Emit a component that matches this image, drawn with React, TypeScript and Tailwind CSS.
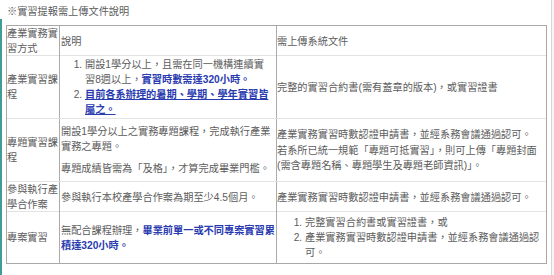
import React from "react";

const blue = "text-[#2a3bb0] font-bold";

function Row({
  h,
  first,
  c1,
  c2,
  c3,
}: {
  h: string;
  first?: boolean;
  c1: React.ReactNode;
  c2: React.ReactNode;
  c3: React.ReactNode;
}) {
  return (
    <div
      className={`grid grid-cols-[52px_217px_1fr] ${h} ${
        first ? "" : "border-t border-[#e3e3e3]"
      }`}
    >
      <div className="flex items-center pl-0">
        <div>{c1}</div>
      </div>
      <div className="flex items-center border-l border-[#ababab] pl-[1px]">
        <div className="w-full">{c2}</div>
      </div>
      <div className="flex items-center border-l border-[#ababab] pl-0">
        <div className="w-full">{c3}</div>
      </div>
    </div>
  );
}

export default function App() {
  return (
    <div className="w-[554px] h-[275px] bg-white flex font-['Liberation_Sans','Noto_Sans_CJK_TC',sans-serif] text-[10.2px] leading-[15px] text-[#5c5c5c]">
      <div className="w-[551px] flex flex-col">
        <div className="pl-[7px] pt-[4px] h-[19px]">※實習提報需上傳文件說明</div>
        <div className="flex-1 border-l-2 border-[#3f9c98] pl-[4px] pt-[6px]">
          <div className="w-[541px] border border-[#a8a8a8]">
            <Row
              first
              h="h-[29px]"
              c1={<>產業實務實習方式</>}
              c2={<>說明</>}
              c3={<>需上傳系統文件</>}
            />
            <Row
              h="h-[63px]"
              c1={<>產業實習課程</>}
              c2={
                <ol className="list-decimal pl-[24px] pr-[5px]">
                  <li>
                    開設1學分以上，且需在同一機構連續實習8週以上，
                    <span className={blue}>實習時數需達320小時。</span>
                  </li>
                  <li>
                    <span className={`${blue} underline`}>
                      目前各系辦理的暑期、學期、學年實習皆屬之。
                    </span>
                  </li>
                </ol>
              }
              c3={<>完整的實習合約書(需有蓋章的版本)，或實習證書</>}
            />
            <Row
              h="h-[63px]"
              c1={<>專題實習課程</>}
              c2={
                <div>
                  <p className="mb-[7px]">
                    開設1學分以上之實務專題課程，完成執行產業實務之專題。
                  </p>
                  <p>專題成績皆需為「及格」，才算完成畢業門檻。</p>
                </div>
              }
              c3={
                <div>
                  <p className="mb-[1px]">
                    產業實務實習時數認證申請書，並經系務會議通過認可。
                  </p>
                  <p>
                    若系所已統一規範「專題可抵實習」，則可上傳「專題封面(需含專題名稱、專題學生及專題老師資訊)」。
                  </p>
                </div>
              }
            />
            <Row
              h="h-[30px]"
              c1={<>參與執行產學合作案</>}
              c2={<>參與執行本校產學合作案為期至少4.5個月。</>}
              c3={<>產業實務實習時數認證申請書，並經系務會議通過認可。</>}
            />
            <Row
              h="h-[52px]"
              c1={<>專案實習</>}
              c2={
                <>
                  無配合課程辦理，
                  <span className={blue}>畢業前單一或不同專案實習累積達320小時。</span>
                </>
              }
              c3={
                <ol className="list-decimal pl-[28px]">
                  <li>完整實習合約書或實習證書，或</li>
                  <li>產業實務實習時數認證申請書，並經系務會議通過認可。</li>
                </ol>
              }
            />
          </div>
        </div>
      </div>
      <div className="w-[1px] bg-[#d6d6d6]" />
      <div className="flex-1 bg-[#f6f6f6]" />
    </div>
  );
}
